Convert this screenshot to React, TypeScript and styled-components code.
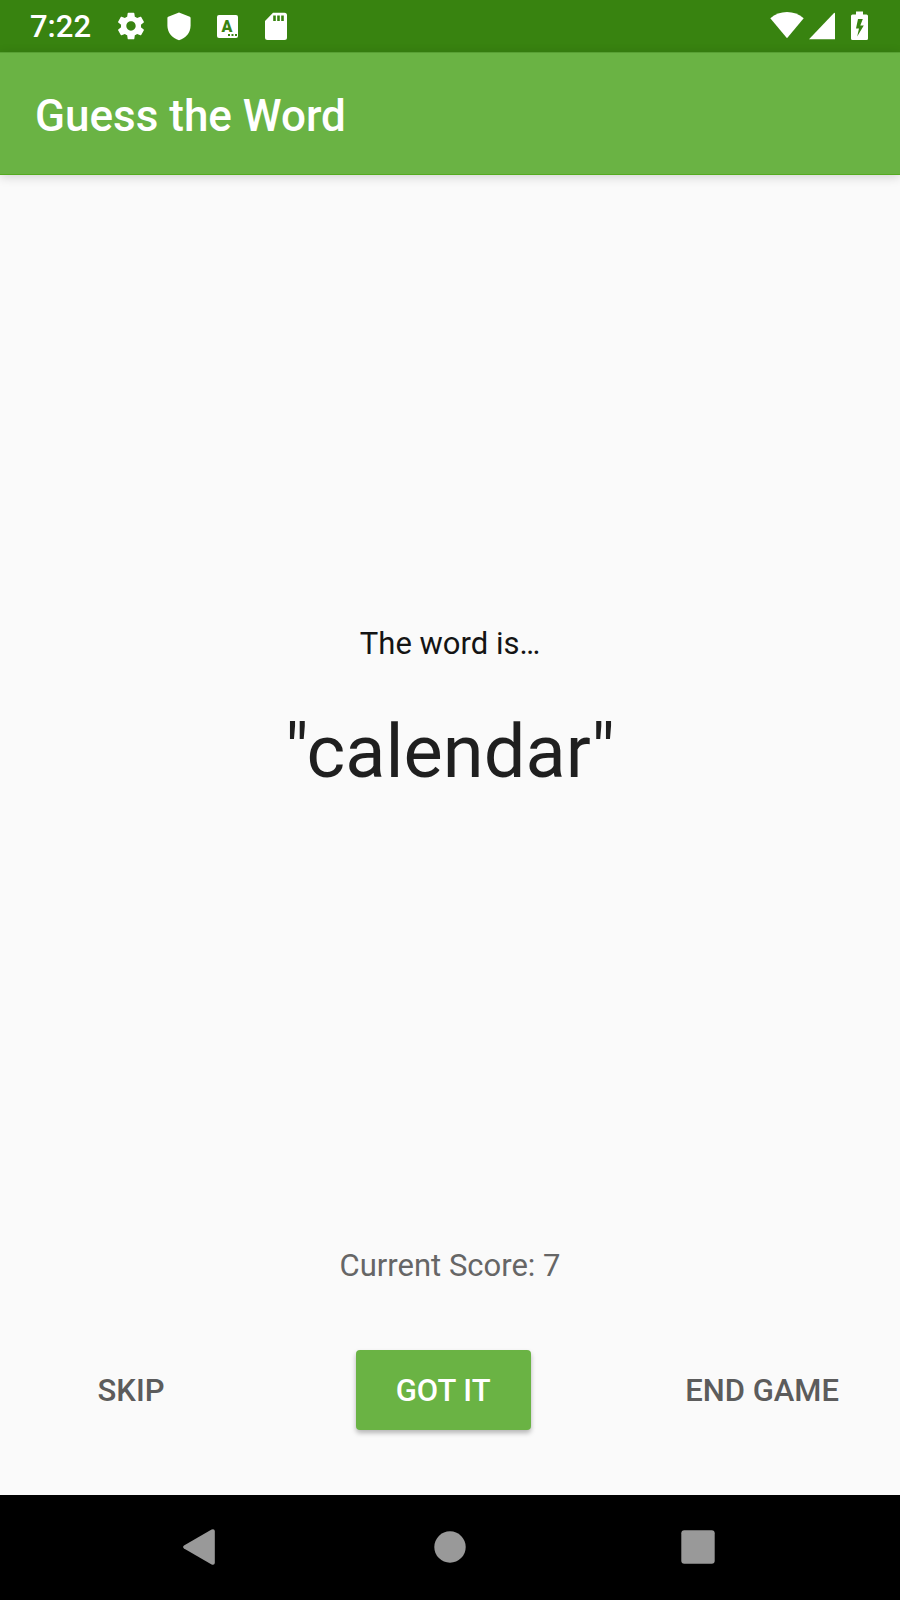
import React, { useState } from "react";
import styled, { createGlobalStyle } from "styled-components";

const GlobalStyle = createGlobalStyle`
  *, *::before, *::after { box-sizing: border-box; }
  body { margin: 0; background: #fafafa; font-family: Roboto, "Noto Sans", sans-serif; }
`;

const Screen = styled.div`
  display: flex;
  flex-direction: column;
  min-height: 100vh;
`;

const StatusBar = styled.div`
  display: flex;
  align-items: center;
  height: 52px;
  padding: 0 32px 0 30px;
  background: #388310;
  color: #fff;
`;

const Clock = styled.time`
  padding-top: 2px;
  font-size: 31px;
  line-height: 36px;
  font-weight: 500;
`;

const StatusIcons = styled.div<{ $gap: number; $end?: boolean }>`
  display: flex;
  align-items: center;
  gap: ${(p) => p.$gap}px;
  margin-left: ${(p) => (p.$end ? "auto" : "24px")};
`;

const BatterySlot = styled.span`
  margin-left: 11px;
`;

const Glyph = styled.svg`
  display: block;
  fill: currentColor;
`;

const AppBar = styled.header`
  display: flex;
  align-items: center;
  height: 123px;
  padding: 4px 35px 0;
  background: #6ab344;
  border-top: 1px solid #58a034;
  border-bottom: 1px solid #55ab20;
  box-shadow: 0 2px 10px rgba(0, 0, 0, 0.16);
`;

const Title = styled.h1`
  margin: 0;
  color: #fff;
  font-size: 44px;
  line-height: 52px;
  font-weight: 500;
`;

const Game = styled.main`
  flex: 1;
  display: flex;
  flex-direction: column;
  padding: 0 35px 65px;
`;

const WordPanel = styled.section`
  flex: 1;
  display: flex;
  flex-direction: column;
  align-items: center;
  justify-content: center;
  gap: 46px;
  padding-bottom: 2px;
  color: #1f1f1f;
`;

const Caption = styled.p<{ $color: string }>`
  margin: 0;
  font-size: 31px;
  line-height: 36px;
  text-align: center;
  color: ${(p) => p.$color};
`;

const Word = styled.p`
  margin: 0;
  font-size: 74px;
  line-height: 88px;
`;

const Actions = styled.div`
  display: flex;
  justify-content: space-between;
  margin-top: 66px;
`;

const ActionButton = styled.button<{ $primary?: boolean }>`
  min-width: ${(p) => (p.$primary ? 175 : 192)}px;
  height: 80px;
  padding: 2px 26px 0;
  border: 0;
  border-radius: 4px;
  background: ${(p) => (p.$primary ? "#6ab344" : "transparent")};
  box-shadow: ${(p) => (p.$primary ? "0 3px 5px rgba(0, 0, 0, 0.28)" : "none")};
  color: ${(p) => (p.$primary ? "#fff" : "#5c5c5c")};
  font-family: inherit;
  font-size: 31px;
  line-height: 36px;
  font-weight: 500;
  text-transform: uppercase;
  cursor: pointer;
`;

const NavBar = styled.nav`
  display: flex;
  align-items: center;
  justify-content: center;
  gap: 152px;
  height: 105px;
  padding-bottom: 2px;
  background: #000;
`;

const NavButton = styled.button`
  width: 96px;
  height: 96px;
  padding: 0;
  border: 0;
  background: none;
  color: #999;
  display: grid;
  place-items: center;
  cursor: pointer;
`;

const Gear = () => (
  <Glyph width="32" height="32" viewBox="0 0 24 24" aria-hidden="true">
    <path d="M19.43 12.98c.04-.32.07-.64.07-.98s-.03-.66-.07-.98l2.11-1.65c.19-.15.24-.42.12-.64l-2-3.46c-.12-.22-.39-.3-.61-.22l-2.49 1c-.52-.4-1.08-.73-1.69-.98l-.38-2.65C14.46 2.18 14.25 2 14 2h-4c-.25 0-.46.18-.49.42l-.38 2.65c-.61.25-1.17.59-1.69.98l-2.49-1c-.23-.09-.49 0-.61.22l-2 3.46c-.13.22-.07.49.12.64l2.11 1.65c-.04.32-.07.65-.07.98s.03.66.07.98l-2.11 1.65c-.19.15-.24.42-.12.64l2 3.46c.12.22.39.3.61.22l2.49-1c.52.4 1.08.73 1.69.98l.38 2.65c.03.24.24.42.49.42h4c.25 0 .46-.18.49-.42l.38-2.65c.61-.25 1.17-.59 1.69-.98l2.49 1c.23.09.49 0 .61-.22l2-3.46c.12-.22.07-.49-.12-.64l-2.11-1.65zM12 15.5c-1.93 0-3.5-1.57-3.5-3.5s1.57-3.5 3.5-3.5 3.5 1.57 3.5 3.5-1.57 3.5-3.5 3.5z" />
  </Glyph>
);

const Shield = () => (
  <Glyph width="32" height="32" viewBox="0 0 32 32" aria-hidden="true">
    <path d="M16 2.6 26.8 6.8Q27.6 7.2 27.6 8V15.5C27.6 22.5 23 28.3 16 30.2 9 28.3 4.4 22.5 4.4 15.5V8Q4.4 7.2 5.2 6.8Z" />
  </Glyph>
);

const LetterBox = () => (
  <Glyph width="32" height="32" viewBox="0 0 32 32" aria-hidden="true">
    <rect x="6" y="5" width="21" height="23" rx="2" />
    <text x="16" y="21.5" textAnchor="middle" fontFamily="Roboto, sans-serif" fontSize="16" fontWeight="900" fill="#388310">
      A
    </text>
    <path fill="#388310" d="M17 24h2v2h-2zM20.5 24h2v2h-2zM24 24h2v2h-2z" />
  </Glyph>
);

const SdCard = () => (
  <Glyph width="32" height="32" viewBox="0 0 32 32" aria-hidden="true">
    <path
      fillRule="evenodd"
      d="M14 2.8H25.5A2.5 2.5 0 0 1 28 5.3V27.5A2.5 2.5 0 0 1 25.5 30H8.5A2.5 2.5 0 0 1 6 27.5V11ZM14.2 5.5V11H16.8V5.5ZM18.2 5.5V11H20.8V5.5ZM22.2 5.5V11H24.8V5.5Z"
    />
  </Glyph>
);

const Wifi = () => (
  <Glyph width="34" height="32" viewBox="0 0 34 32" aria-hidden="true">
    <path d="M17 28.2 0.3 8.2C5 4 10.8 1.9 17 1.9S29 4 33.7 8.2Z" />
  </Glyph>
);

const Signal = () => (
  <Glyph width="26" height="32" viewBox="0 0 26 32" aria-hidden="true">
    <path d="M0 29.3 25 3Q26 2.4 26 3.6V29.3Z" />
  </Glyph>
);

const Battery = () => (
  <Glyph width="17" height="32" viewBox="0 0 17 32" aria-hidden="true">
    <path
      fillRule="evenodd"
      d="M5 1.5H12V4.5H15.5Q17 4.5 17 6V28.5Q17 30 15.5 30H1.5Q0 30 0 28.5V6Q0 4.5 1.5 4.5H5ZM7 9 5 18.5H8L6.2 26.5 12.8 15.5H9.3L11.8 9Z"
    />
  </Glyph>
);

export default function App() {
  const [score, setScore] = useState(7);

  return (
    <>
      <GlobalStyle />
      <Screen>
        <StatusBar>
          <Clock>7:22</Clock>
          <StatusIcons $gap={16}>
            <Gear />
            <Shield />
            <LetterBox />
            <SdCard />
          </StatusIcons>
          <StatusIcons $gap={5} $end>
            <Wifi />
            <Signal />
            <BatterySlot>
              <Battery />
            </BatterySlot>
          </StatusIcons>
        </StatusBar>

        <AppBar>
          <Title>Guess the Word</Title>
        </AppBar>

        <Game>
          <WordPanel>
            <Caption $color="#141414">The word is…</Caption>
            <Word>"calendar"</Word>
          </WordPanel>
          <Caption $color="#666">Current Score: {score}</Caption>
          <Actions>
            <ActionButton type="button" onClick={() => setScore(score - 1)}>Skip</ActionButton>
            <ActionButton type="button" $primary onClick={() => setScore(score + 1)}>Got it</ActionButton>
            <ActionButton type="button">End game</ActionButton>
          </Actions>
        </Game>

        <NavBar aria-label="System navigation">
          <NavButton type="button" aria-label="Back">
            <Glyph width="38" height="36" viewBox="0 0 38 36">
              <path d="M1 16.6 28.6.6Q31.5-.4 31.8 2V34Q31.5 36.4 28.6 35.4L1 19.4Q-.8 18 1 16.6Z" />
            </Glyph>
          </NavButton>
          <NavButton type="button" aria-label="Home">
            <Glyph width="32" height="32" viewBox="0 0 32 32">
              <circle cx="16" cy="16" r="15.7" />
            </Glyph>
          </NavButton>
          <NavButton type="button" aria-label="Overview">
            <Glyph width="34" height="34" viewBox="0 0 34 34">
              <rect x="0.3" y="0.3" width="33.4" height="33.4" rx="3" />
            </Glyph>
          </NavButton>
        </NavBar>
      </Screen>
    </>
  );
}
